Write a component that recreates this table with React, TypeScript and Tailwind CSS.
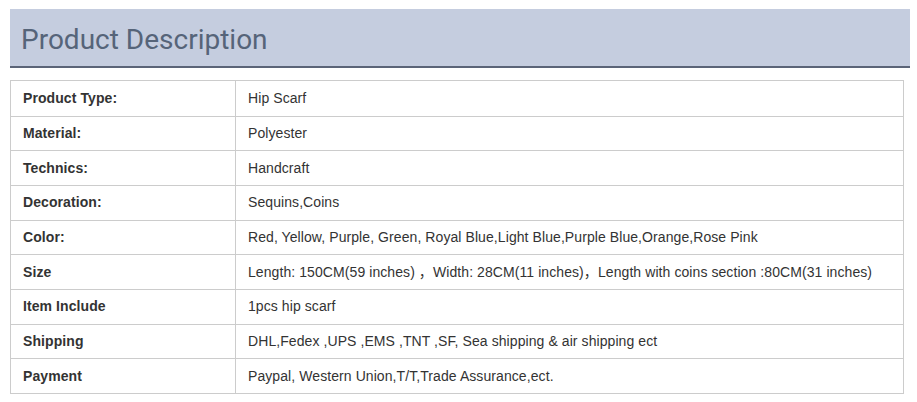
import React from "react";

const rows: [string, string][] = [
  ["Product Type:", "Hip Scarf"],
  ["Material:", "Polyester"],
  ["Technics:", "Handcraft"],
  ["Decoration:", "Sequins,Coins"],
  ["Color:", "Red, Yellow, Purple, Green, Royal Blue,Light Blue,Purple Blue,Orange,Rose Pink"],
  ["Size", "Length: 150CM(59 inches) \uFF0CWidth: 28CM(11 inches)\uFF0CLength with coins section :80CM(31 inches)"],
  ["Item Include", "1pcs hip scarf"],
  ["Shipping", "DHL,Fedex ,UPS ,EMS ,TNT ,SF, Sea shipping & air shipping ect"],
  ["Payment", "Paypal, Western Union,T/T,Trade Assurance,ect."],
];

export default function App() {
  return (
    <div className="w-[917px] h-[402px] bg-white pt-[9px] pl-[10px]">
      <div className="w-[900px] h-[59px] bg-[#c5cddf] border-b-2 border-[#5b6478] flex items-center pl-[11px]">
        <h1
          className="text-[28px] text-[#566479] leading-none pt-[5px]"
          style={{ fontFamily: "Roboto, 'Open Sans', sans-serif" }}
        >
          Product Description
        </h1>
      </div>
      <div
        className="mt-[12px] w-[894px] border border-[#cccccc] text-[14px] text-[#333333] tracking-[0.08px]"
        style={{ fontFamily: "'Liberation Sans', Arial, 'Noto Sans CJK SC', sans-serif" }}
      >
        {rows.map(([k, v], i) => (
          <div
            key={k}
            className={`flex h-[34.67px] ${i > 0 ? "border-t border-[#cccccc]" : ""}`}
          >
            <div className="w-[225px] shrink-0 border-r border-[#cccccc] pl-[12px] flex items-center font-bold">
              {k}
            </div>
            <div className="flex-1 pl-[12px] flex items-center whitespace-nowrap">{v}</div>
          </div>
        ))}
      </div>
    </div>
  );
}
